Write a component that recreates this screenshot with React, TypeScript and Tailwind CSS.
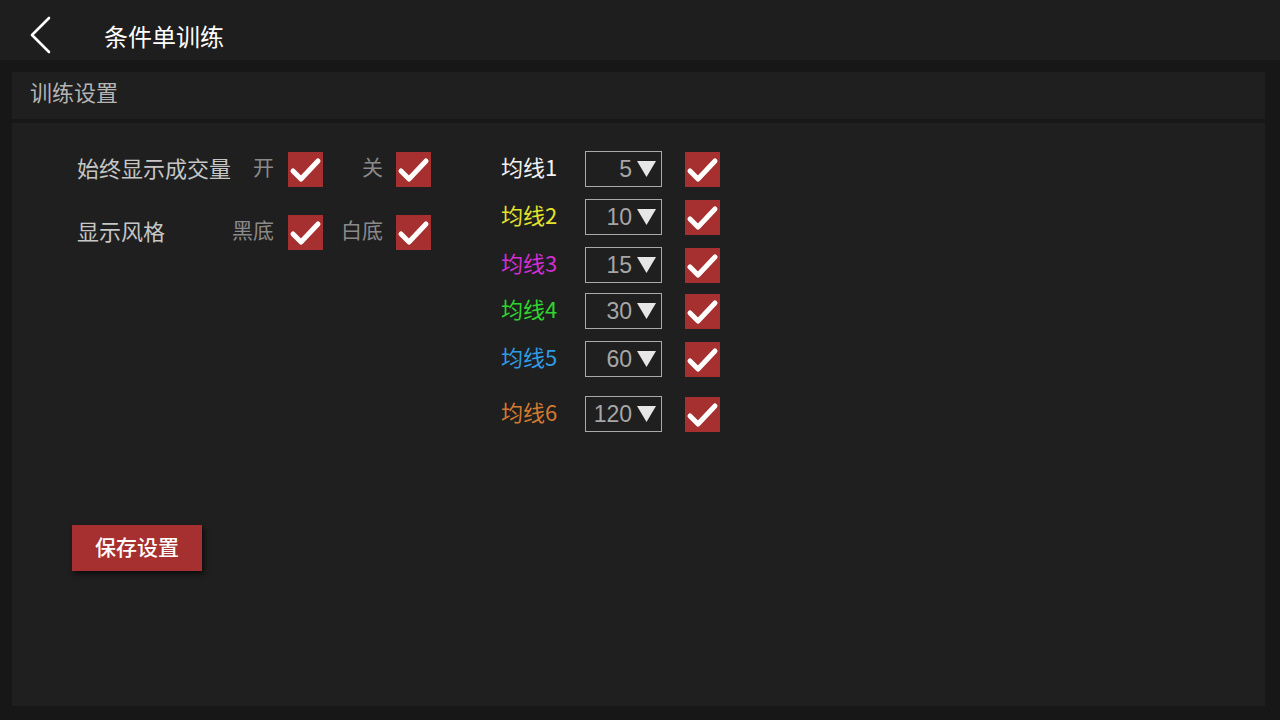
import React from "react";

const font = { fontFamily: '"Noto Sans CJK SC", "Noto Sans", sans-serif' };

function Check({ className = "" }: { className?: string }) {
  return (
    <div className={`w-[35px] h-[35px] bg-[#a62f2f] flex items-center justify-center shrink-0 ${className}`}>
      <svg width="35" height="35" viewBox="0 0 35 35">
        <path d="M5 19 L13 27 L30 9" fill="none" stroke="#ffffff" strokeWidth="5" strokeLinecap="round" strokeLinejoin="round" />
      </svg>
    </div>
  );
}

function Dropdown({ value }: { value: string }) {
  return (
    <div className="w-[77px] h-[36px] border border-[#a9a9a9] flex items-center justify-end pr-[5px]">
      <span className="text-[23px] text-[#a6a6a6] leading-none" style={{ fontFamily: '"Liberation Sans", Arial, sans-serif' }}>
        {value}
      </span>
      <svg width="19" height="16" viewBox="0 0 19 16" className="ml-[5px]">
        <path d="M0 0 L19 0 L9.5 16 Z" fill="#e6e6e6" />
      </svg>
    </div>
  );
}

const lines = [
  { label: "均线1", color: "text-[#f2f2f2]", value: "5", mt: "mt-0" },
  { label: "均线2", color: "text-[#e3e32b]", value: "10", mt: "mt-[12px]" },
  { label: "均线3", color: "text-[#d22ed2]", value: "15", mt: "mt-[12px]" },
  { label: "均线4", color: "text-[#2fd42f]", value: "30", mt: "mt-[10px]" },
  { label: "均线5", color: "text-[#2f9be3]", value: "60", mt: "mt-[12px]" },
  { label: "均线6", color: "text-[#d27a2f]", value: "120", mt: "mt-[19px]" },
];

export default function App() {
  return (
    <div className="w-[1280px] h-[720px] bg-[#171717] flex flex-col overflow-hidden" style={font}>
      <div className="h-[60px] bg-[#1e1e1e] flex items-center shrink-0 pt-[10px]">
        <div className="w-[104px] flex items-center pl-[28px]">
          <svg width="26" height="38" viewBox="0 0 26 38">
            <path d="M21 2 L4 19 L21 36" fill="none" stroke="#ffffff" strokeWidth="2.6" strokeLinecap="round" strokeLinejoin="round" />
          </svg>
        </div>
        <span className="text-white text-[24px] leading-none translate-y-[1px]">条件单训练</span>
      </div>
      <div className="flex-1 flex flex-col pl-[12px] pr-[15px] pt-[12px] pb-[14px]">
        <div className="h-[47px] bg-[#1f1f1f] flex items-center pl-[18px] shrink-0">
          <span className="text-[#b4b4b4] text-[22px] leading-none -translate-y-[5px]">训练设置</span>
        </div>
        <div className="flex-1 mt-[4px] bg-[#1f1f1f] pl-[60px] pt-[29px]">
          <div className="flex">
            <div className="flex flex-col gap-[28px] pl-[5px]">
              <div className="flex items-center">
                <span className="w-[154px] text-[22px] text-[#c6c6c6] leading-none -translate-y-[3px]">始终显示成交量</span>
                <span className="w-[43px] text-right text-[21px] text-[#8a8a8a] leading-none -translate-y-[3px]">开</span>
                <Check className="ml-[14px]" />
                <span className="w-[60px] text-right text-[21px] text-[#8a8a8a] leading-none -translate-y-[3px]">关</span>
                <Check className="ml-[13px]" />
              </div>
              <div className="flex items-center">
                <span className="w-[154px] text-[22px] text-[#c6c6c6] leading-none -translate-y-[3px]">显示风格</span>
                <span className="w-[43px] text-right text-[21px] text-[#8a8a8a] leading-none -translate-y-[3px]">黑底</span>
                <Check className="ml-[14px]" />
                <span className="w-[60px] text-right text-[21px] text-[#8a8a8a] leading-none -translate-y-[3px]">白底</span>
                <Check className="ml-[13px]" />
              </div>
            </div>
            <div className="flex flex-col ml-[70px] -mt-[1px]">
              {lines.map((l) => (
                <div key={l.label} className={`flex items-center ${l.mt}`}>
                  <span className={`w-[84px] text-[22px] leading-none -translate-y-[3px] ${l.color}`}>{l.label}</span>
                  <Dropdown value={l.value} />
                  <Check className="ml-[23px]" />
                </div>
              ))}
            </div>
          </div>
          <div className="mt-[93px]">
            <button className="w-[130px] h-[46px] bg-[#a62f2f] text-white text-[21px] font-medium shadow-[2px_3px_5px_rgba(0,0,0,0.6)] flex items-center justify-center">
              <span className="-translate-y-[1px]">保存设置</span>
            </button>
          </div>
        </div>
      </div>
    </div>
  );
}
